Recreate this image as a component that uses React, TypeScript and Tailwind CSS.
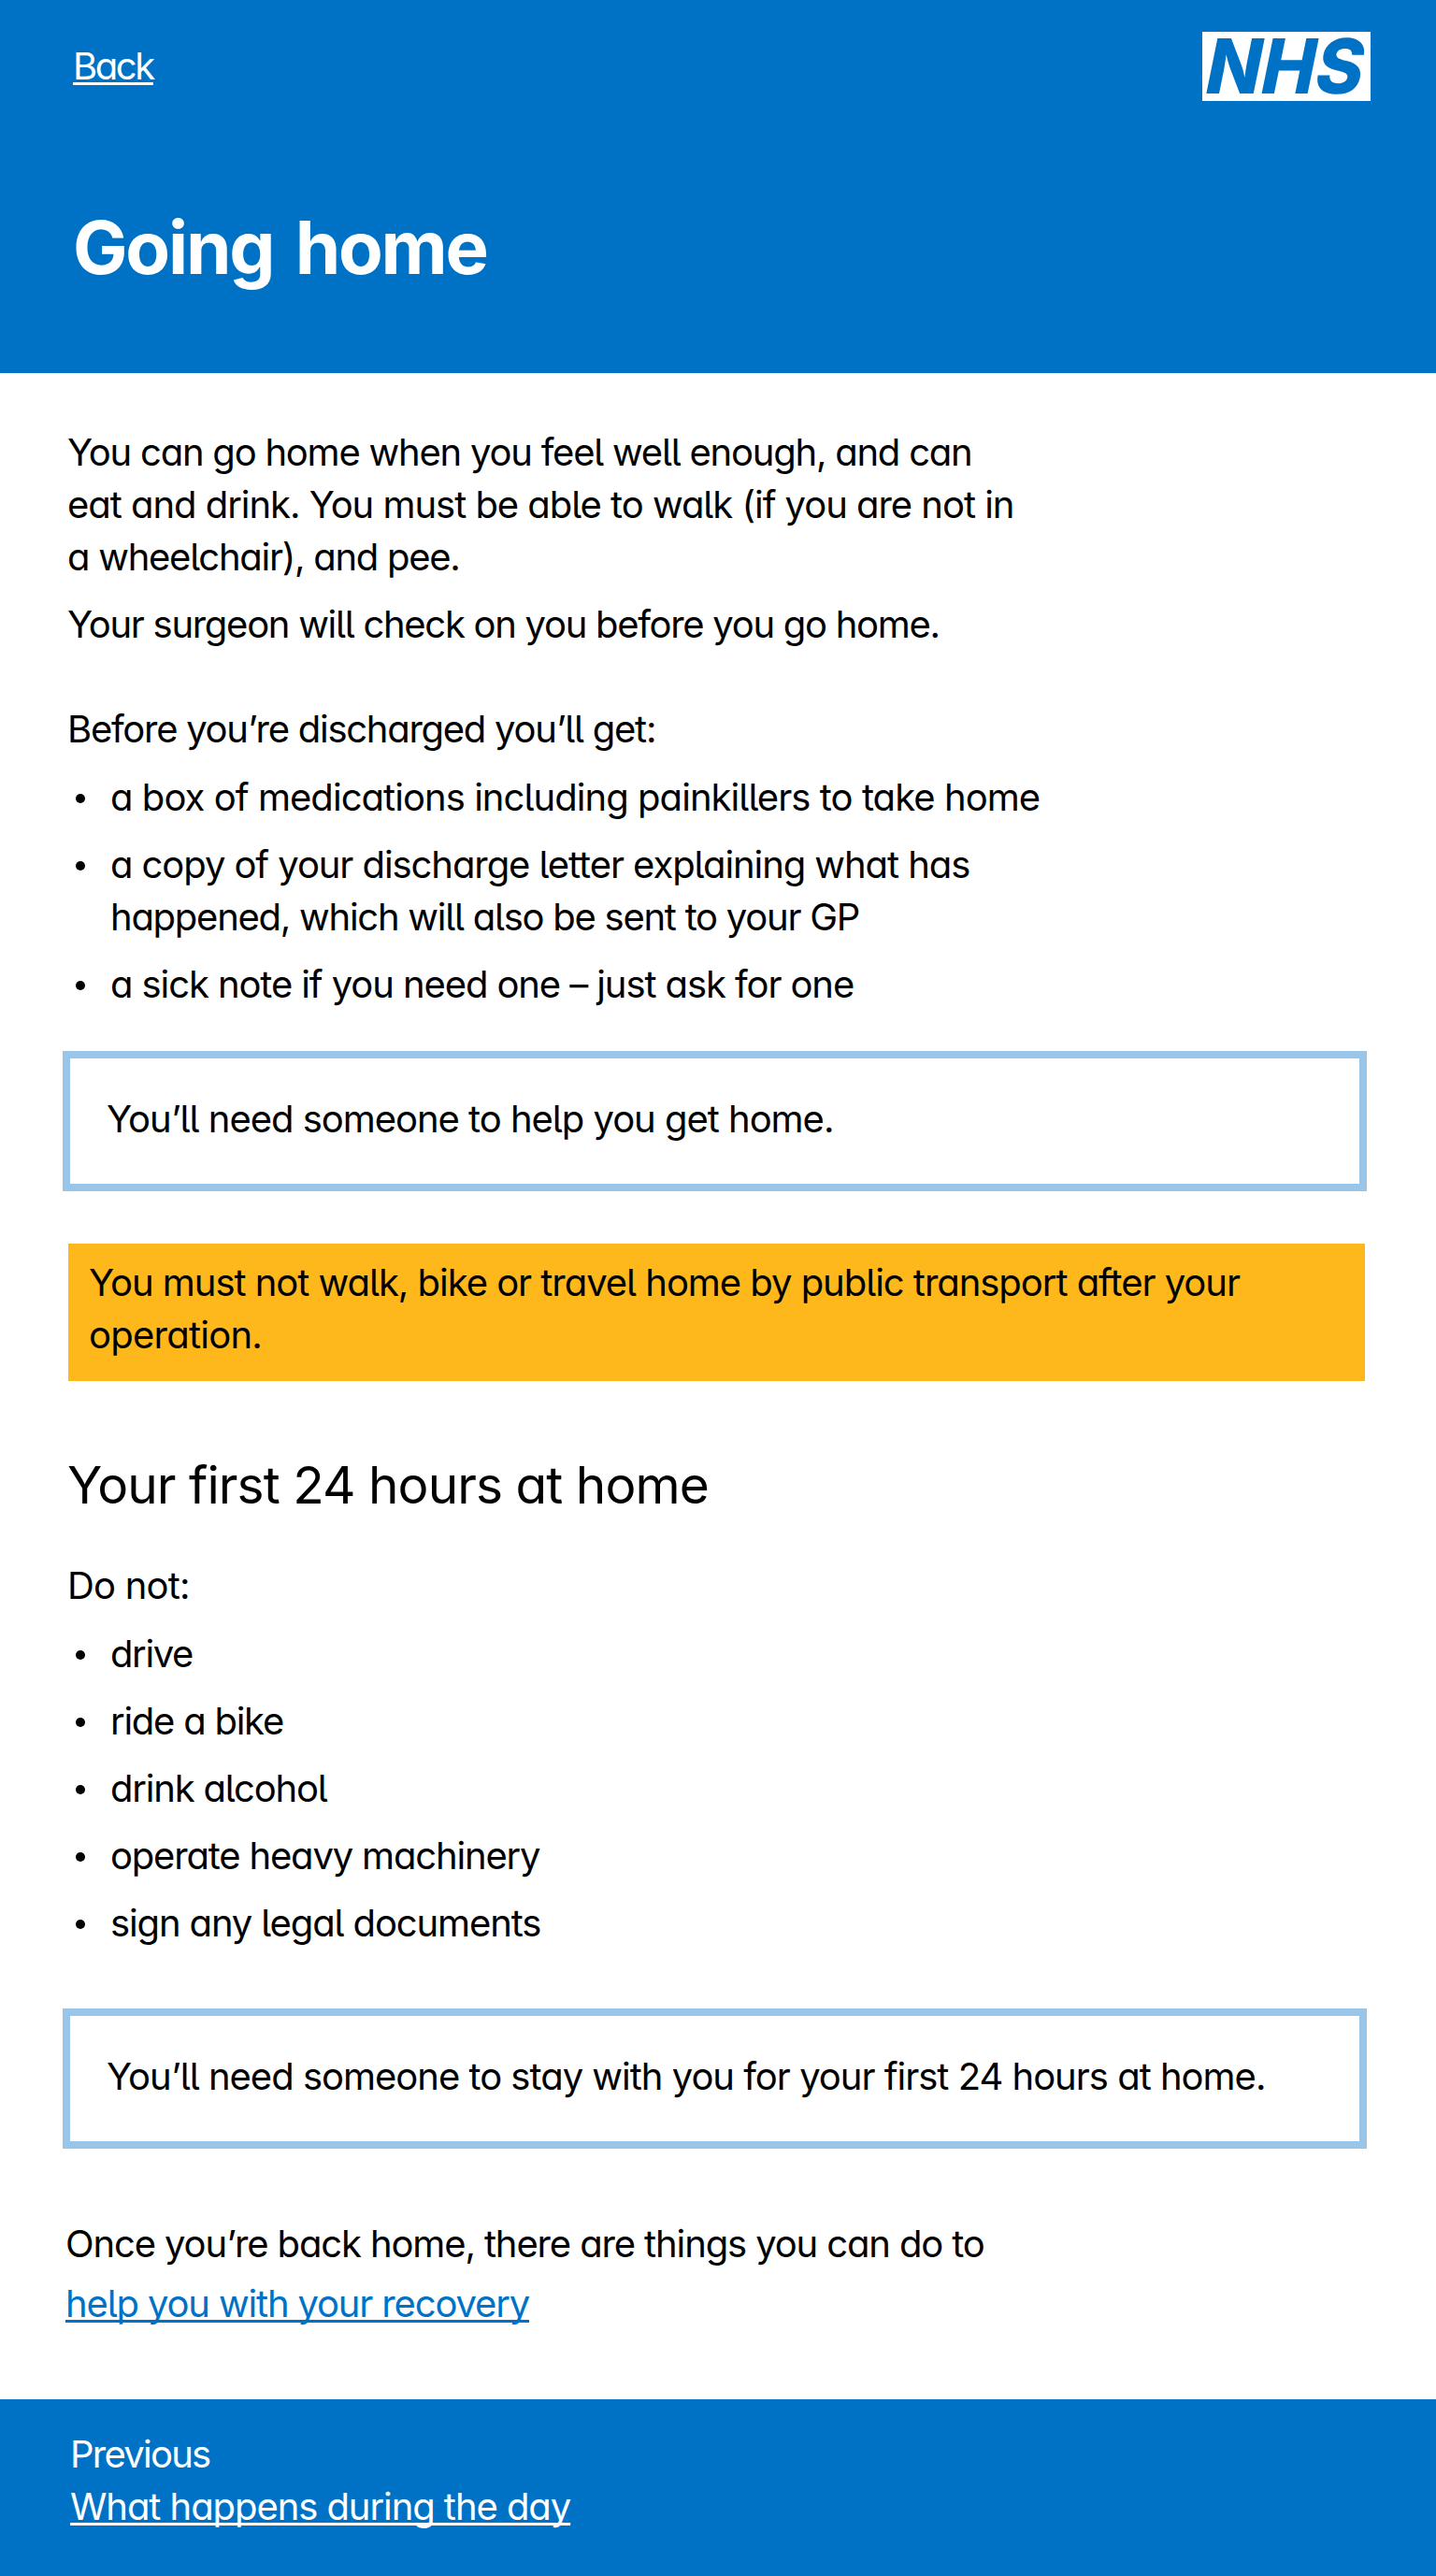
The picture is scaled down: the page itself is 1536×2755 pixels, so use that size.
import { type ReactNode } from "react";

function Bullet({ children }: { children: ReactNode }) {
  return (
    <li className="flex gap-[27px] pl-[9px]">
      <span className="mt-[24px] size-[10px] shrink-0 rounded-full bg-black" />
      <div>{children}</div>
    </li>
  );
}

function Line({ track, children }: { track: string; children: ReactNode }) {
  return <span className={`block whitespace-nowrap ${track}`}>{children}</span>;
}

function Callout({ children }: { children: ReactNode }) {
  return (
    <div className="-ml-[5px] h-[150px] w-[1395px] border-8 border-[#99c6e8] pt-[37px] pl-[39px]">
      {children}
    </div>
  );
}

function NhsLogo() {
  return (
    <svg width="180" height="74" viewBox="0 0 180 74" className="overflow-visible" role="img" aria-label="NHS">
      <rect width="180" height="74" fill="#fff" />
      <text
        transform="translate(3.5 66.3) skewX(-2.6)"
        textLength="168"
        lengthAdjust="spacingAndGlyphs"
        className="fill-[#0072c6] font-['Inter'] text-[81px] font-extrabold italic"
      >
        NHS
      </text>
    </svg>
  );
}

export default function App() {
  return (
    <div className="flex min-h-[2755px] w-full flex-col bg-white font-['Inter',sans-serif] text-[40px] leading-[56px] text-black [font-feature-settings:'cv11','cv05']">
      <header className="h-[399px] bg-[#0072c6] text-white">
        <div className="flex items-start justify-between pt-[34px] pr-[70px] pl-[78px]">
          <a href="#" className="mt-[9px] tracking-[-2.4px] underline decoration-[3px] underline-offset-[3px] [text-decoration-skip-ink:none]">
            Back
          </a>
          <NhsLogo />
        </div>
        <h1 className="mt-[109px] pl-[78px] text-[78px] leading-[96px] font-bold tracking-[-2.2px] [word-spacing:7px]">
          Going home
        </h1>
      </header>

      <main className="pt-[57px] pl-[72px]">
        <p>
          <Line track="tracking-[-1.23px]">You can go home when you feel well enough, and can</Line>
          <Line track="tracking-[-1.04px]">eat and drink. You must be able to walk (if you are not in</Line>
          <Line track="tracking-[-1.27px]">a wheelchair), and pee.</Line>
        </p>
        <p className="mt-4">
          <Line track="tracking-[-1.29px]">Your surgeon will check on you before you go home.</Line>
        </p>
        <p className="mt-14">
          <Line track="tracking-[-1.27px]">Before you’re discharged you’ll get:</Line>
        </p>
        <ul className="mt-[17px] flex flex-col gap-4">
          <Bullet>
            <Line track="tracking-[-0.95px]">a box of medications including painkillers to take home</Line>
          </Bullet>
          <Bullet>
            <Line track="tracking-[-1.08px]">a copy of your discharge letter explaining what has</Line>
            <Line track="tracking-[-1.26px]">happened, which will also be sent to your GP</Line>
          </Bullet>
          <Bullet>
            <Line track="tracking-[-1.1px]">a sick note if you need one – just ask for one</Line>
          </Bullet>
        </ul>

        <div className="mt-[43px]">
          <Callout>
            <Line track="tracking-[-1.03px]">You’ll need someone to help you get home.</Line>
          </Callout>
        </div>

        <div className="mt-[56px] ml-px h-[147px] w-[1387px] bg-[#ffb81c] pt-[14px] pl-[22px]">
          <Line track="tracking-[-1.04px]">You must not walk, bike or travel home by public transport after your</Line>
          <Line track="tracking-[-0.75px]">operation.</Line>
        </div>

        <h2 className="mt-[76px] text-[55px] leading-[70px] tracking-[-0.95px]">Your first 24 hours at home</h2>

        <p className="mt-[45px]">
          <Line track="tracking-[-0.8px]">Do not:</Line>
        </p>
        <ul className="mt-[17px] flex flex-col gap-4">
          <Bullet>
            <Line track="tracking-[-1.4px]">drive</Line>
          </Bullet>
          <Bullet>
            <Line track="tracking-[-1.25px]">ride a bike</Line>
          </Bullet>
          <Bullet>
            <Line track="tracking-[-1.2px]">drink alcohol</Line>
          </Bullet>
          <Bullet>
            <Line track="tracking-[-1.18px]">operate heavy machinery</Line>
          </Bullet>
          <Bullet>
            <Line track="tracking-[-1.13px]">sign any legal documents</Line>
          </Bullet>
        </ul>

        <div className="mt-[63px]">
          <Callout>
            <Line track="tracking-[-1.01px]">You’ll need someone to stay with you for your first 24 hours at home.</Line>
          </Callout>
        </div>

        <p className="mt-[74px] -ml-[2px]">
          <Line track="tracking-[-1.13px]">Once you’re back home, there are things you can do to</Line>
          <a href="#" className="mt-2 block w-fit whitespace-nowrap tracking-[-1.16px] text-[#0072c6] underline decoration-[3px] underline-offset-[3px] [text-decoration-skip-ink:none]">
            help you with your recovery
          </a>
        </p>
      </main>

      <footer className="mt-[74px] grow bg-[#0072c6] pt-[31px] pl-[75px] text-white">
        <p className="tracking-[-1.75px]">Previous</p>
        <a href="#" className="block w-fit whitespace-nowrap tracking-[-1.07px] underline decoration-[3px] underline-offset-[3px] [text-decoration-skip-ink:none]">
          What happens during the day
        </a>
      </footer>
    </div>
  );
}
